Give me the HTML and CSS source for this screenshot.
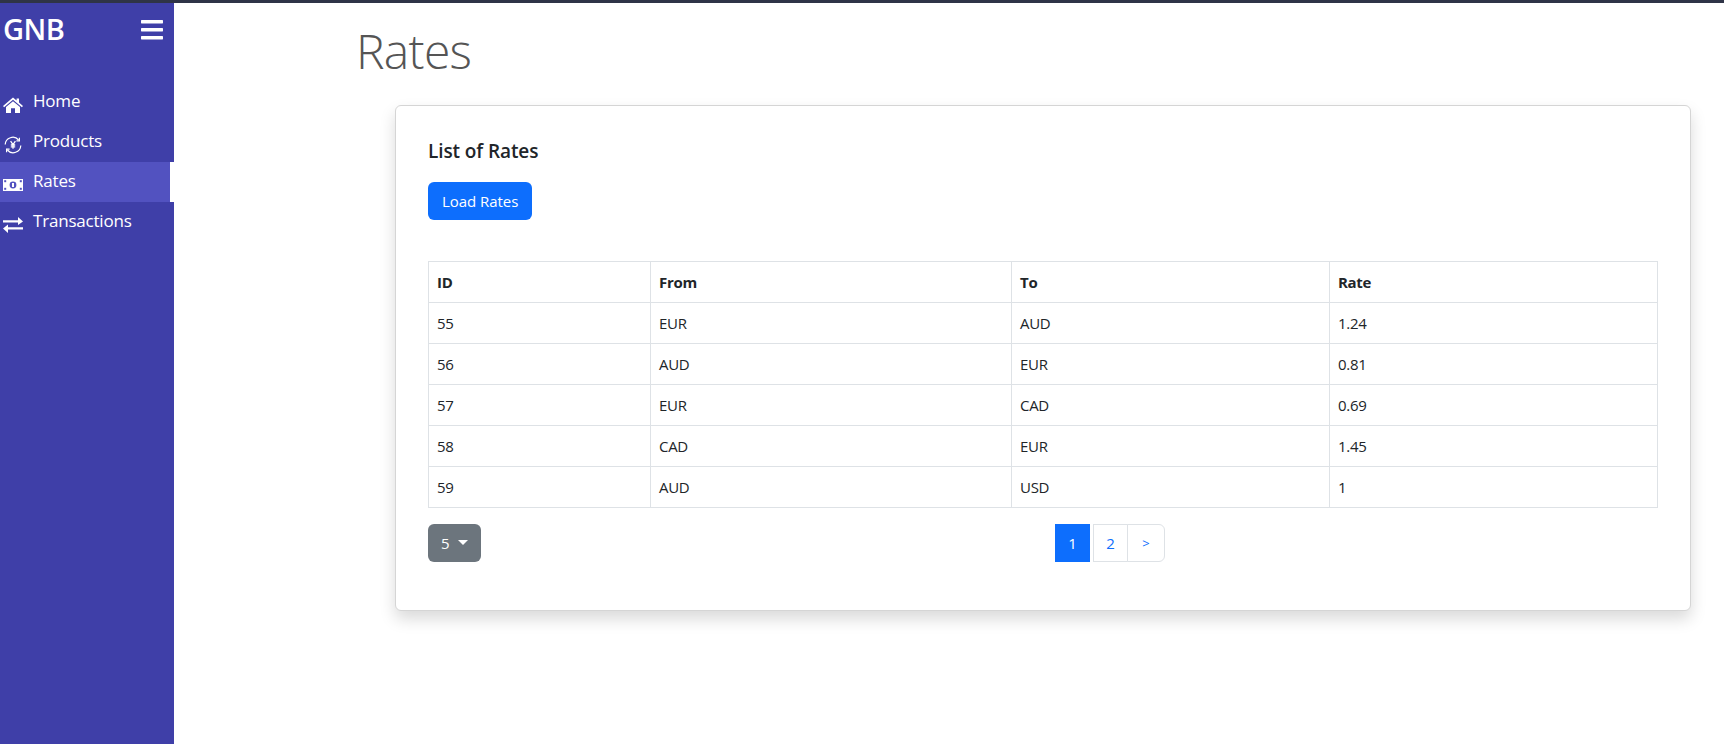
FILE: index.html
```html
<!DOCTYPE html>
<html>
<head>
    <title>Rates</title>
    <link rel="stylesheet" href="styles.css">
</head>
<body>
    <div class="app">
        <nav class="sidebar">
            <div class="brand-row">
                <span class="brand">GNB</span>
                <svg class="burger" viewBox="0 0 22 20" width="22" height="20" fill="#fff">
                    <rect x="0" y="0" width="22" height="3.4" rx="0.6"/>
                    <rect x="0" y="8" width="22" height="3.4" rx="0.6"/>
                    <rect x="0" y="16" width="22" height="3.4" rx="0.6"/>
                </svg>
            </div>
            <ul class="menu">
                <li class="menu-item">
                    <svg class="menu-icon" viewBox="0 0 20 16" width="20" height="16" fill="#fff">
                        <path d="M10 0.5 L13.6 3.6 V1.5 H16 V5.6 L20 9 L18.9 10.2 L10 2.7 L1.1 10.2 L0 9 Z"/>
                        <path d="M10 4.2 L17 10 V16 H12 V11.2 H8 V16 H3 V10 Z"/>
                    </svg>
                    <span>Home</span>
                </li>
                <li class="menu-item">
                    <svg class="menu-icon" viewBox="0 0 20 18" width="20" height="18" fill="none" stroke="#fff" stroke-width="1.2">
                        <path d="M2.2 8.5 A7.6 7.6 0 0 1 15.6 4"/>
                        <path d="M17.8 9.5 A7.6 7.6 0 0 1 4.4 14"/>
                        <path d="M16.4 1.8 V4.8 H13.4 M3.6 16.2 V13.2 H6.6"/>
                        <path d="M7.6 5.2 L10 8.6 L12.4 5.2 M10 8.6 V12.8 M7.8 9 H12.2 M7.8 10.8 H12.2" stroke-width="1.3"/>
                    </svg>
                    <span>Products</span>
                </li>
                <li class="menu-item active">
                    <svg class="menu-icon" viewBox="0 0 20 12" width="20" height="12">
                        <rect width="20" height="12" fill="#fff"/>
                        <circle cx="10" cy="6" r="3.4" fill="#5252c0"/>
                        <rect x="9" y="4" width="2" height="4" fill="#fff"/>
                        <g fill="#5252c0">
                            <rect x="1.2" y="1.2" width="2" height="2"/>
                            <rect x="16.8" y="1.2" width="2" height="2"/>
                            <rect x="1.2" y="8.8" width="2" height="2"/>
                            <rect x="16.8" y="8.8" width="2" height="2"/>
                        </g>
                    </svg>
                    <span>Rates</span>
                </li>
                <li class="menu-item">
                    <svg class="menu-icon" viewBox="0 0 20 16" width="20" height="16" fill="#fff">
                        <path d="M0 3.2 H15 V0 L20 4.4 L15 8 V5.4 H0 Z"/>
                        <path d="M20 10.2 H5 V7.6 L0 11.6 L5 16 V12.6 H20 Z"/>
                    </svg>
                    <span>Transactions</span>
                </li>
            </ul>
        </nav>

        <main class="content">
            <h1 class="page-title">Rates</h1>
            <section class="card">
                <h2 class="card-title">List of Rates</h2>
                <button class="btn btn-primary">Load Rates</button>
                <table class="rates-table">
                    <thead>
                        <tr><th class="col-id">ID</th><th class="col-from">From</th><th class="col-to">To</th><th>Rate</th></tr>
                    </thead>
                    <tbody>
                        <tr><td>55</td><td>EUR</td><td>AUD</td><td>1.24</td></tr>
                        <tr><td>56</td><td>AUD</td><td>EUR</td><td>0.81</td></tr>
                        <tr><td>57</td><td>EUR</td><td>CAD</td><td>0.69</td></tr>
                        <tr><td>58</td><td>CAD</td><td>EUR</td><td>1.45</td></tr>
                        <tr><td>59</td><td>AUD</td><td>USD</td><td>1</td></tr>
                    </tbody>
                </table>
                <div class="table-footer">
                    <button class="btn btn-secondary">5<span class="caret"></span></button>
                    <div class="pagination">
                        <span class="page current">1</span>
                        <span class="page">2</span>
                        <span class="page last">&gt;</span>
                    </div>
                </div>
            </section>
        </main>
    </div>
</body>
</html>
```

FILE: styles.css
```css
* {
    box-sizing: border-box;
}

body {
    margin: 0;
    font-family: "Open Sans", "Noto Sans", sans-serif;
    font-size: 15px;
    color: #212529;
    background-color: #fff;
    border-top: 3px solid #2f3447;
}

.app {
    display: flex;
    height: 741px;
    overflow: hidden;
}

/* sidebar */
.sidebar {
    width: 174px;
    flex-shrink: 0;
    background-color: #3f3fa8;
    color: #fff;
}

.brand-row {
    display: flex;
    justify-content: space-between;
    align-items: center;
    height: 50px;
    padding: 0 11px 0 3px;
    margin-bottom: 29px;
}

.brand {
    font-size: 29px;
    font-weight: 600;
    letter-spacing: -0.5px;
}

.burger {
    margin-top: 4px;
}

.menu {
    list-style: none;
    margin: 0;
    padding: 0;
}

.menu-item {
    display: flex;
    align-items: center;
    gap: 10px;
    height: 40px;
    padding-left: 3px;
    font-size: 17px;
    letter-spacing: -0.2px;
}

.menu-icon {
    flex-shrink: 0;
    margin-top: 6px;
}

.menu-item span {
    margin-bottom: 4px;
}

.menu-item.active {
    background-color: #5252c0;
    border-right: 4px solid #fff;
}

/* main */
.content {
    flex: 1;
    padding: 0 33px 0 182px;
}

.page-title {
    margin: 19px 0 25px;
    font-size: 48px;
    font-weight: 300;
    line-height: 58px;
    letter-spacing: -0.7px;
    color: #555;
}

.card {
    width: 1296px;
    height: 506px;
    margin-left: 39px;
    padding: 33px 32px;
    background-color: #fff;
    border: 1px solid #d5d5d5;
    border-radius: 6px;
    box-shadow: 0 8px 16px rgba(0, 0, 0, 0.15);
}

.card-title {
    margin: 0 0 19px;
    font-size: 19px;
    font-weight: 600;
    line-height: 24px;
    letter-spacing: -0.1px;
    color: #212529;
}

.btn {
    display: block;
    height: 38px;
    padding: 0 14px;
    border: none;
    border-radius: 6px;
    font-family: inherit;
    font-size: 15px;
    letter-spacing: -0.05px;
    color: #fff;
}

.btn-primary {
    background-color: #0d6efd;
}

.btn-secondary {
    display: flex;
    align-items: center;
    width: 53px;
    padding: 0 13px;
    background-color: #6c757d;
}

.caret {
    margin-left: 8px;
    margin-bottom: 2px;
    border-top: 5px solid #fff;
    border-left: 5px solid transparent;
    border-right: 5px solid transparent;
}

.rates-table {
    width: 1230px;
    margin-top: 41px;
    border-collapse: collapse;
    table-layout: fixed;
    letter-spacing: -0.3px;
}

.rates-table th,
.rates-table td {
    height: 41px;
    padding: 0 8px;
    border: 1px solid #dee2e6;
    text-align: left;
}

.rates-table th {
    font-weight: 700;
}

.col-id {
    width: 222px;
}

.col-from {
    width: 361px;
}

.col-to {
    width: 318px;
}

.table-footer {
    display: flex;
    align-items: flex-start;
    margin-top: 16px;
}

.pagination {
    display: flex;
    margin-left: 574px;
}

.page {
    display: flex;
    align-items: center;
    justify-content: center;
    width: 35px;
    height: 38px;
    margin-left: -1px;
    border: 1px solid #dee2e6;
    color: #0d6efd;
    background-color: #fff;
}

.page.current {
    margin-left: 0;
    margin-right: 4px;
    color: #fff;
    background-color: #0d6efd;
    border-color: #0d6efd;
}

.page.last {
    width: 38px;
    font-size: 13px;
    border-radius: 0 6px 6px 0;
}
```
